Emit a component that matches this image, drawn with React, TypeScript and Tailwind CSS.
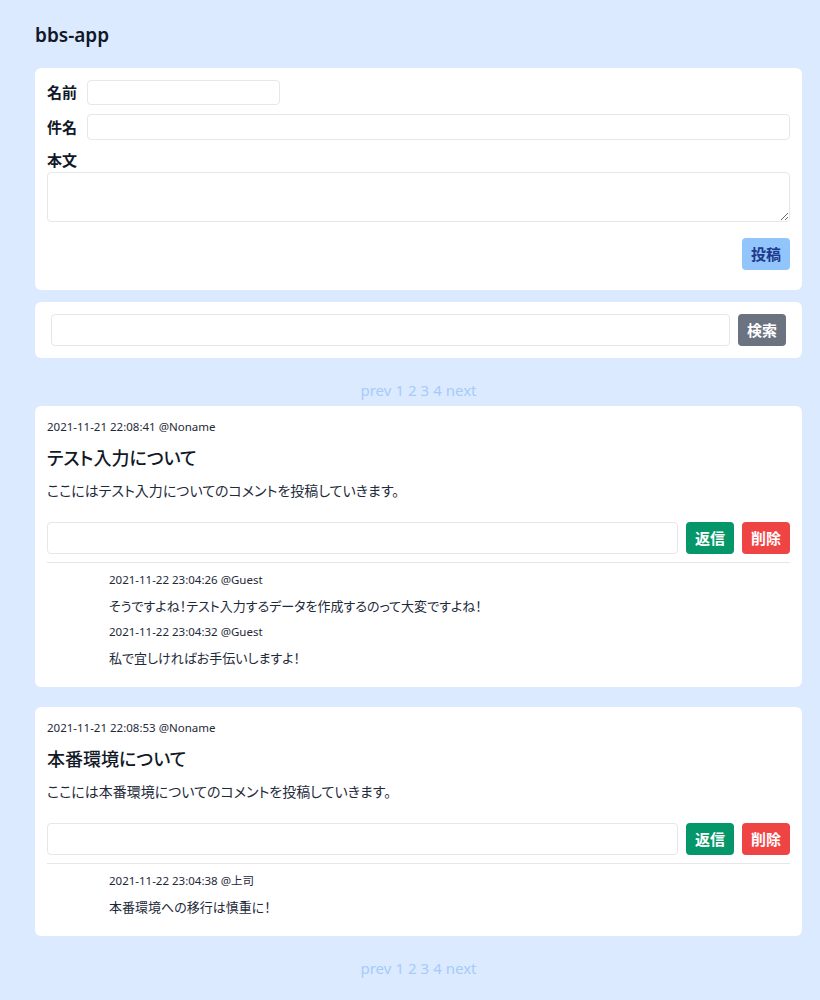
const posts = [
  {
    id: 1,
    date: '2021-11-21 22:08:41',
    name: 'Noname',
    title: 'テスト入力について',
    body: 'ここにはテスト入力についてのコメントを投稿していきます。',
    replies: [
      { date: '2021-11-22 23:04:26', name: 'Guest', body: 'そうですよね！テスト入力するデータを作成するのって大変ですよね！' },
      { date: '2021-11-22 23:04:32', name: 'Guest', body: '私で宜しければお手伝いしますよ！' },
    ],
  },
  {
    id: 2,
    date: '2021-11-21 22:08:53',
    name: 'Noname',
    title: '本番環境について',
    body: 'ここには本番環境についてのコメントを投稿していきます。',
    replies: [{ date: '2021-11-22 23:04:38', name: '上司', body: '本番環境への移行は慎重に！' }],
  },
]

function Pager() {
  return (
    <div className="flex h-[48px] items-end justify-center gap-[4px] pb-[6px] text-[15px] leading-[20px] text-[#a6cbfb]">
      <span>prev</span>
      <span>1</span>
      <span>2</span>
      <span>3</span>
      <span>4</span>
      <span>next</span>
    </div>
  )
}

export default function App() {
  return (
    <div
      className="min-h-screen bg-[#dbeafe] text-[#111827] [font-feature-settings:'palt']"
      style={{ fontFamily: '"Noto Sans", "Noto Sans CJK JP", sans-serif' }}
    >
      <div className="ml-[35px] w-[767px] pt-[22px]">
        <h1 className="h-[46px] text-[19px] font-semibold leading-[26px]">bbs-app</h1>

        <div className="rounded-md bg-white px-3 pb-5 pt-3">
          <div className="flex items-center gap-[7px]">
            <label className="w-[33px] text-[15px] font-bold">名前</label>
            <input className="h-[25px] w-[193px] rounded border border-gray-200" />
          </div>
          <div className="mt-[9px] flex items-center gap-[7px]">
            <label className="w-[33px] text-[15px] font-bold">件名</label>
            <input className="h-[26px] flex-1 rounded border border-gray-200" />
          </div>
          <label className="mt-[8px] block text-[15px] font-bold leading-[24px]">本文</label>
          <textarea className="block h-[50px] w-full rounded border border-gray-200" />
          <div className="mt-4 flex justify-end">
            <button className="h-8 w-12 rounded bg-[#93c5fd] text-[15px] font-bold text-[#1e3a8a]">投稿</button>
          </div>
        </div>

        <div className="mt-3 flex gap-2 rounded-md bg-white px-4 py-3">
          <input className="h-8 flex-1 rounded border border-gray-200" />
          <button className="h-8 w-12 rounded bg-[#6b7280] text-[15px] font-bold text-white">検索</button>
        </div>

        <Pager />

        <div className="flex flex-col gap-5">
          {posts.map((post) => (
            <div key={post.id} className="rounded-md bg-white px-3 pb-3 pt-3">
              <p className="text-[11.5px] leading-[18px] text-gray-800">
                {post.date} @{post.name}
              </p>
              <h2 className="mt-[9px] text-lg font-medium leading-[26px]">{post.title}</h2>
              <p className="mt-[10px] text-sm leading-[20px] text-gray-800">{post.body}</p>
              <div className="mt-[21px] flex gap-2">
                <input className="h-8 flex-1 rounded border border-gray-200" />
                <button className="h-8 w-12 rounded bg-[#059669] text-[15px] font-bold text-white">返信</button>
                <button className="h-8 w-12 rounded bg-[#ef4444] text-[15px] font-bold text-white">削除</button>
              </div>
              <div className="mt-2 border-t border-gray-200 pl-[62px] pt-[8px]">
                {post.replies.map((r, i) => (
                  <div key={i} className="mb-[6px]">
                    <p className="text-[11.5px] leading-[18px] text-gray-800">
                      {r.date} @{r.name}
                    </p>
                    <p className="mt-[6px] text-[13px] leading-[22px] text-gray-800">{r.body}</p>
                  </div>
                ))}
              </div>
            </div>
          ))}
        </div>

        <Pager />
      </div>
    </div>
  )
}
